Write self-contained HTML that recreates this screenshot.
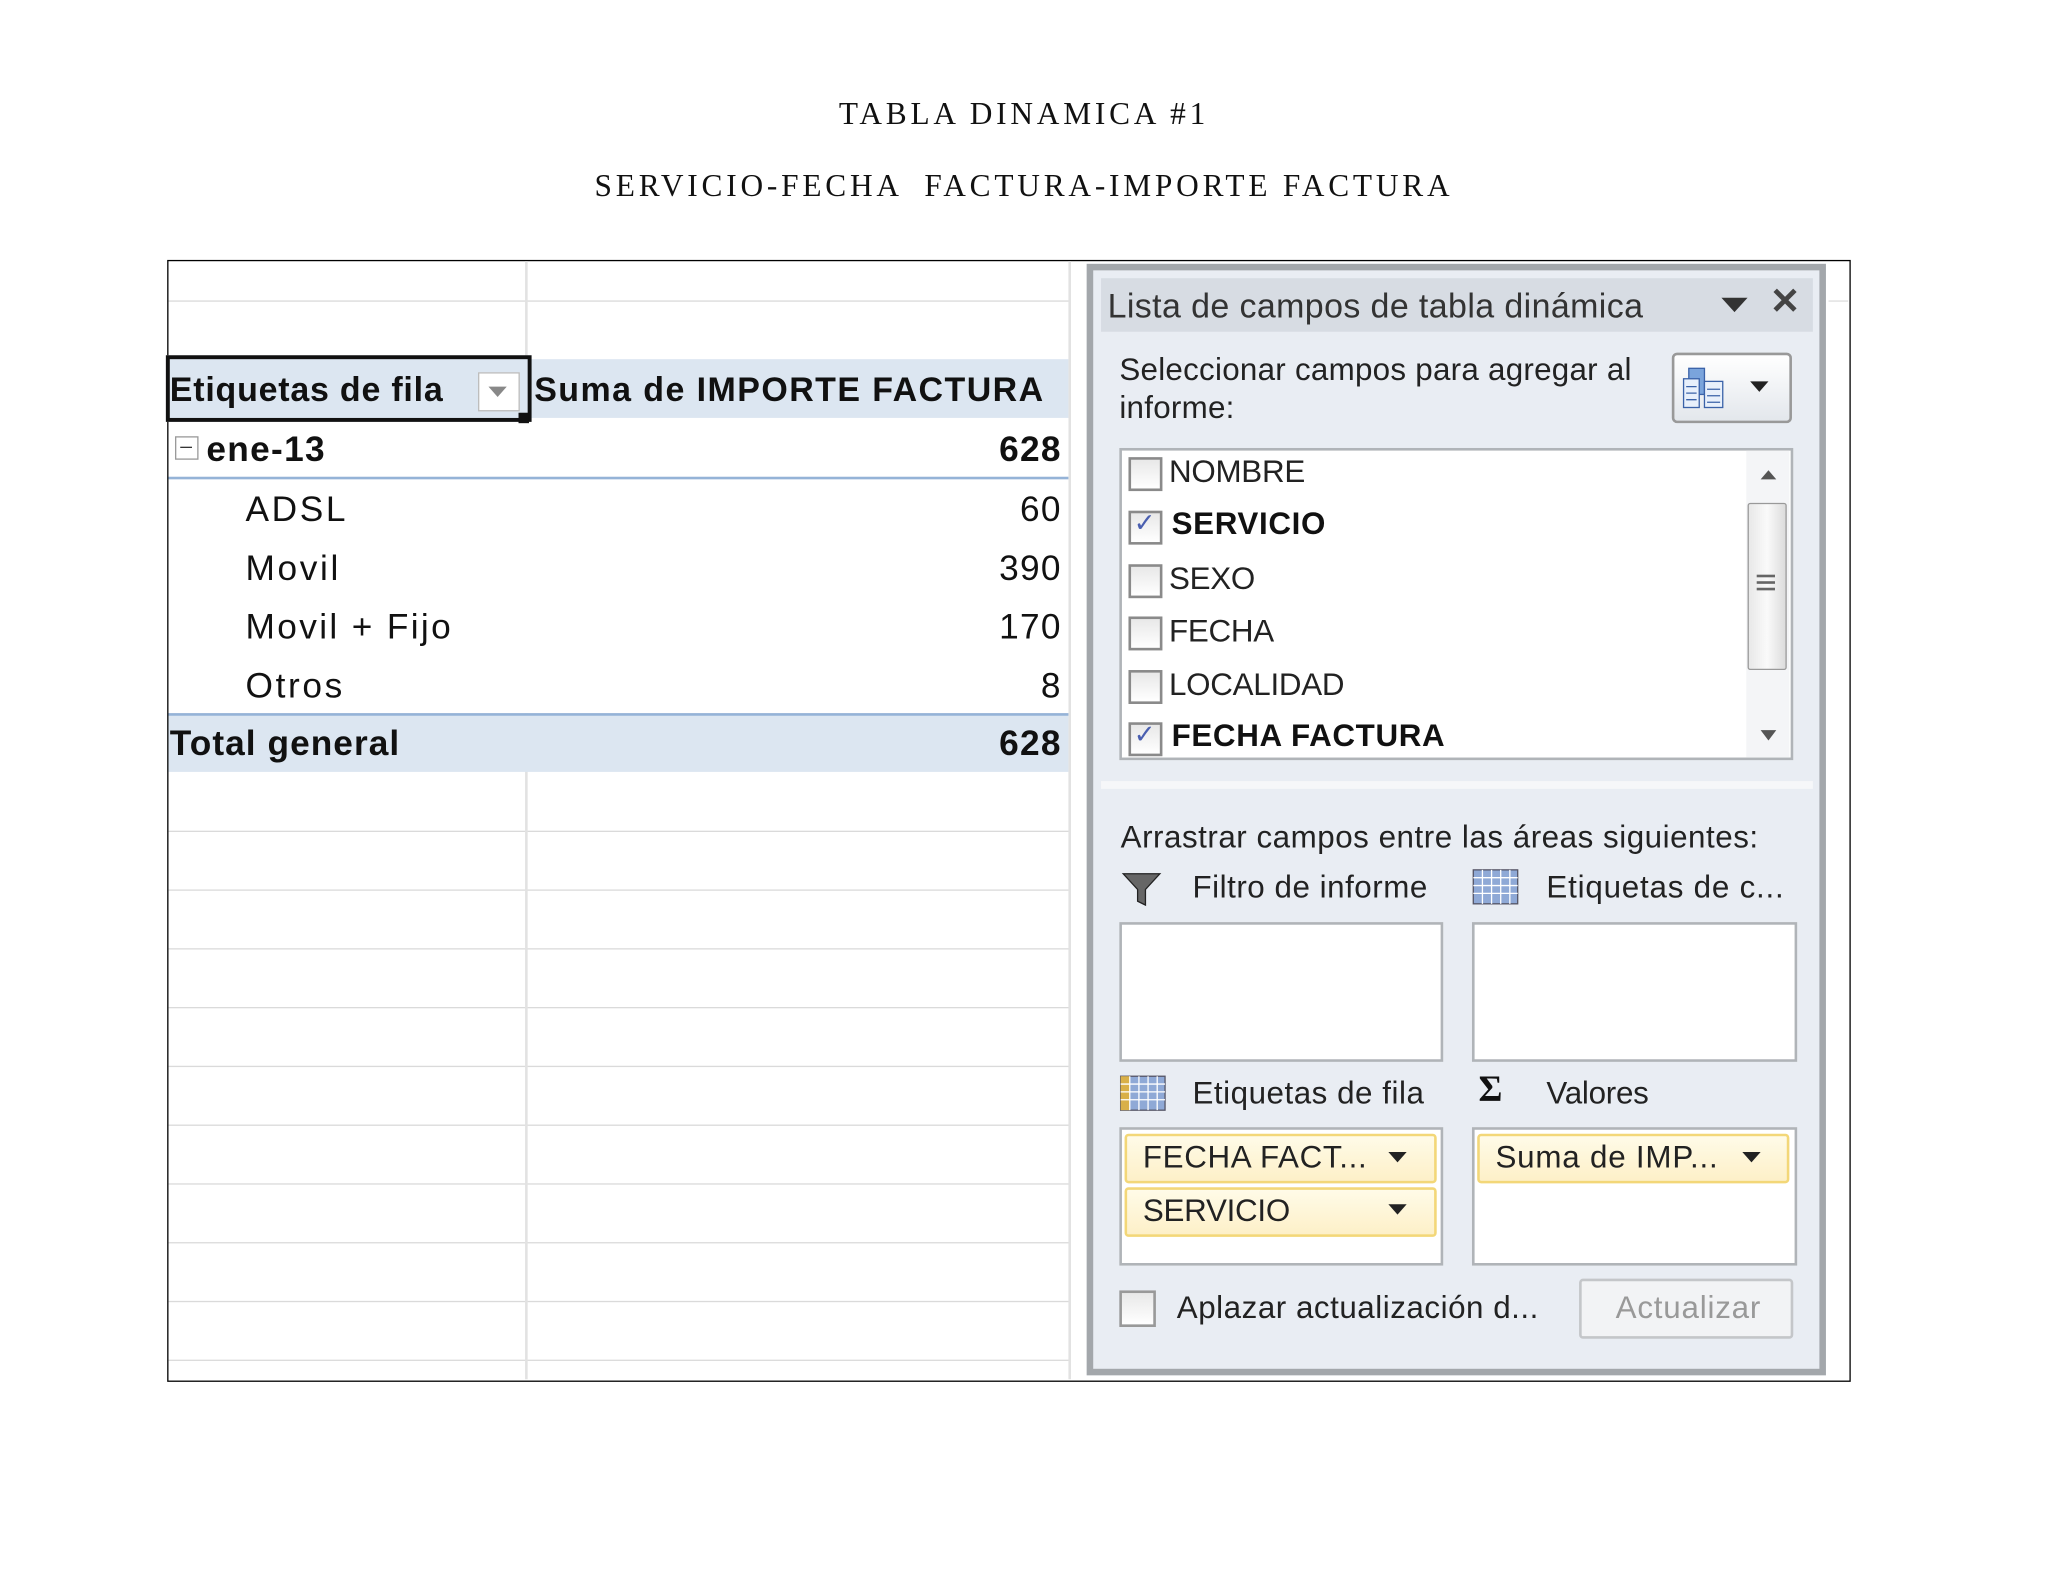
<!DOCTYPE html>
<html><head><meta charset="utf-8">
<style>
html,body{margin:0;padding:0;background:#fff;width:2048px;height:1582px;overflow:hidden}
#w{position:absolute;left:0;top:0;width:1568px;height:1212px;transform:scale(1.3061);transform-origin:0 0;font-family:"Liberation Sans",sans-serif}
.a{position:absolute;white-space:nowrap}
.t{font-family:"Liberation Serif",serif;font-size:24px;letter-spacing:2.9px;color:#111;text-align:center;width:1568px;left:0}
.hl{position:absolute;left:129px;width:690px;height:1px;background:#dadada}
.vl{position:absolute;top:200px;width:2px;height:856px;background:#e2e2e2}
.c{font-size:27px;color:#111;letter-spacing:1px}
.p{font-size:24px;color:#222;letter-spacing:-0.2px}
.cb{position:absolute;width:22px;height:22px;border:2px solid #8a8a8a;background:linear-gradient(#e8e8e8,#fff)}
.box{position:absolute;background:#fff;border:2px solid #b0b4b8}
.pill{position:absolute;background:linear-gradient(#fffbe8,#fdf0c8);border:2px solid #f3d778;border-radius:3px}
.tri{position:absolute;width:0;height:0;border-left:7px solid transparent;border-right:7px solid transparent;border-top:8px solid #222}
</style></head><body><div id="w">
<div class="a t" style="top:75px">TABLA DINAMICA #1</div>
<div class="a t" style="top:130px">SERVICIO-FECHA &nbsp;FACTURA-IMPORTE FACTURA</div>

<div style="position:absolute;left:128px;top:199px;width:1287px;height:857px;border:1px solid #000"></div>
<div class="hl" style="top:230px"></div>
<div class="hl" style="top:636px"></div><div class="hl" style="top:681px"></div><div class="hl" style="top:726px"></div><div class="hl" style="top:771px"></div><div class="hl" style="top:816px"></div><div class="hl" style="top:861px"></div><div class="hl" style="top:906px"></div><div class="hl" style="top:951px"></div><div class="hl" style="top:996px"></div><div class="hl" style="top:1041px"></div>
<div class="vl" style="left:402px"></div><div class="vl" style="left:818px"></div>
<div style="position:absolute;left:1400px;top:230px;width:15px;height:1px;background:#ddd"></div>

<div style="position:absolute;left:129px;top:275px;width:689px;height:45px;background:#dce6f1"></div>
<div style="position:absolute;left:129px;top:320px;width:689px;height:226px;background:#fff"></div>
<div style="position:absolute;left:129px;top:365px;width:689px;height:2px;background:#95b3d7"></div>
<div style="position:absolute;left:129px;top:546px;width:689px;height:45px;background:#dce6f1;border-top:2px solid #95b3d7;box-sizing:border-box"></div>
<div style="position:absolute;left:127px;top:272px;width:274px;height:45px;border:3px solid #111;background:#dce6f1"></div>
<div style="position:absolute;left:397px;top:316px;width:8px;height:8px;background:#111"></div>
<div style="position:absolute;left:366px;top:285px;width:30px;height:28px;background:#fff;border:1px solid #bbb"></div>
<div class="tri" style="left:374px;top:296px;border-top-color:#888"></div>
<div class="a c" style="left:130px;top:283px;font-weight:bold;font-size:26px;letter-spacing:0.6px">Etiquetas de fila</div>
<div class="a c" style="left:409px;top:283px;font-weight:bold;font-size:26px;letter-spacing:1.1px">Suma de IMPORTE FACTURA</div>
<div style="position:absolute;left:134px;top:334px;width:16px;height:16px;border:1px solid #999;background:#fff"></div>
<div style="position:absolute;left:138px;top:342px;width:9px;height:1px;background:#333"></div>
<div class="a c" style="left:158px;top:329px;font-weight:bold">ene-13</div>
<div class="a c" style="right:755px;top:329px;font-weight:bold">628</div>
<div class="a c" style="left:188px;top:375px;letter-spacing:2px">ADSL</div><div class="a c" style="right:755px;top:375px">60</div>
<div class="a c" style="left:188px;top:420px;letter-spacing:2px">Movil</div><div class="a c" style="right:755px;top:420px">390</div>
<div class="a c" style="left:188px;top:465px;letter-spacing:1.8px">Movil + Fijo</div><div class="a c" style="right:755px;top:465px">170</div>
<div class="a c" style="left:188px;top:510px;letter-spacing:2px">Otros</div><div class="a c" style="right:755px;top:510px">8</div>
<div class="a c" style="left:130px;top:554px;font-weight:bold;letter-spacing:0.8px">Total general</div><div class="a c" style="right:755px;top:554px;font-weight:bold">628</div>

<!-- panel -->
<div style="position:absolute;left:832px;top:202px;width:556px;height:841px;border:5px solid #a3a7ab;background:#e9edf3"></div>
<div style="position:absolute;left:843px;top:213px;width:545px;height:41px;background:#d7dce3"></div>
<div class="a p" style="left:848px;top:219px;font-size:26px;color:#333;letter-spacing:0.3px">Lista de campos de tabla dinámica</div>
<div class="tri" style="left:1318px;top:228px;border-left-width:10px;border-right-width:10px;border-top-width:11px;border-top-color:#333"></div>
<div class="a" style="left:1355px;top:214px;font-size:28px;font-weight:bold;color:#444">✕</div>
<div class="a p" style="left:857px;top:269px;line-height:29px;letter-spacing:0.2px">Seleccionar campos para agregar al<br>informe:</div>
<div style="position:absolute;left:1280px;top:270px;width:88px;height:50px;border:2px solid #999;border-radius:4px;background:linear-gradient(#fff,#e3e7ec)"></div>
<svg class="a" style="left:1287px;top:280px" width="40" height="36"><rect x="6" y="2" width="12" height="20" fill="#7aa4dc" stroke="#3a62a8"/><rect x="2" y="10" width="12" height="22" fill="#e8f0fb" stroke="#3a62a8"/><rect x="18" y="12" width="14" height="20" fill="#e8f0fb" stroke="#3a62a8"/><path d="M4 16h8M4 21h8M4 26h8M20 18h10M20 23h10M20 28h10" stroke="#3a62a8"/></svg>
<div class="tri" style="left:1340px;top:292px"></div>
<div class="box" style="left:857px;top:343px;width:512px;height:235px"></div>
<div style="position:absolute;left:1337px;top:345px;width:33px;height:235px;background:#f4f5f7"></div>
<div style="position:absolute;left:1338px;top:385px;width:28px;height:126px;border:1px solid #999;border-radius:2px;background:linear-gradient(90deg,#e8e8e8,#fafafa,#dcdcdc)"></div>
<div class="a" style="left:1345px;top:440px;width:14px;height:2px;background:#666;box-shadow:0 5px 0 #666,0 10px 0 #666"></div>
<div class="tri" style="left:1348px;top:360px;border-top:none;border-bottom:7px solid #555;border-left-width:6px;border-right-width:6px"></div>
<div class="tri" style="left:1348px;top:559px;border-left-width:6px;border-right-width:6px;border-top-color:#555"></div>
<div class="cb" style="left:864px;top:350px"></div><div class="a p" style="left:895px;top:348px">NOMBRE</div>
<div class="cb" style="left:864px;top:391px"></div><div class="a" style="left:868px;top:388px;color:#4a5fb0;font-size:20px">✓</div><div class="a p" style="left:897px;top:388px;font-weight:bold;color:#111;letter-spacing:0.5px">SERVICIO</div>
<div class="cb" style="left:864px;top:432px"></div><div class="a p" style="left:895px;top:430px">SEXO</div>
<div class="cb" style="left:864px;top:472px"></div><div class="a p" style="left:895px;top:470px">FECHA</div>
<div class="cb" style="left:864px;top:513px"></div><div class="a p" style="left:895px;top:511px">LOCALIDAD</div>
<div class="cb" style="left:864px;top:553px"></div><div class="a" style="left:868px;top:550px;color:#4a5fb0;font-size:20px">✓</div><div class="a p" style="left:897px;top:550px;font-weight:bold;color:#111;letter-spacing:0.5px">FECHA FACTURA</div>
<div style="position:absolute;left:843px;top:598px;width:545px;height:6px;background:#f6f7f9"></div>
<div class="a p" style="left:858px;top:628px;letter-spacing:0.4px">Arrastrar campos entre las áreas siguientes:</div>
<svg class="a" style="left:858px;top:667px" width="34" height="28"><path d="M2 2h28L19 14v12l-6-3V14z" fill="#666" stroke="#222"/></svg>
<div class="a p" style="left:913px;top:666px;letter-spacing:0.4px">Filtro de informe</div>
<svg class="a" style="left:1127px;top:665px" width="36" height="28"><rect x="1" y="1" width="34" height="26" fill="#8fa9d6" stroke="#556"/><path d="M1 7h34M1 13h34M1 19h34M8 1v26M15 1v26M22 1v26M29 1v26" stroke="#fff"/></svg>
<div class="a p" style="left:1184px;top:666px;letter-spacing:0.6px">Etiquetas de c...</div>
<div class="box" style="left:857px;top:706px;width:244px;height:103px"></div>
<div class="box" style="left:1127px;top:706px;width:245px;height:103px"></div>
<svg class="a" style="left:857px;top:823px" width="36" height="28"><rect x="1" y="1" width="34" height="26" fill="#8fa9d6" stroke="#556"/><rect x="1" y="1" width="7" height="26" fill="#d9b048"/><path d="M1 7h34M1 13h34M1 19h34M8 1v26M15 1v26M22 1v26M29 1v26" stroke="#fff"/></svg>
<div class="a p" style="left:913px;top:824px;letter-spacing:0.4px">Etiquetas de fila</div>
<div class="a" style="left:1132px;top:819px;font-size:28px;font-weight:bold;color:#111;font-family:'Liberation Serif',serif">Σ</div>
<div class="a p" style="left:1184px;top:824px">Valores</div>
<div class="box" style="left:857px;top:863px;width:244px;height:102px"></div>
<div class="box" style="left:1127px;top:863px;width:245px;height:102px"></div>
<div class="pill" style="left:861px;top:868px;width:235px;height:34px"></div><div class="a p" style="left:875px;top:873px;letter-spacing:0.5px">FECHA FACT...</div><div class="tri" style="left:1063px;top:882px"></div>
<div class="pill" style="left:861px;top:909px;width:235px;height:34px"></div><div class="a p" style="left:875px;top:914px">SERVICIO</div><div class="tri" style="left:1063px;top:922px"></div>
<div class="pill" style="left:1131px;top:868px;width:235px;height:34px"></div><div class="a p" style="left:1145px;top:873px;letter-spacing:0.6px">Suma de IMP...</div><div class="tri" style="left:1334px;top:882px"></div>
<div class="cb" style="left:857px;top:988px;width:24px;height:24px;border-color:#999"></div>
<div class="a p" style="left:901px;top:988px;letter-spacing:0.4px">Aplazar actualización d...</div>
<div style="position:absolute;left:1209px;top:979px;width:160px;height:42px;border:2px solid #c4c6c9;border-radius:3px;background:#f2f3f5"></div>
<div class="a p" style="left:1237px;top:988px;color:#999;letter-spacing:0.6px">Actualizar</div>
</div></body></html>
